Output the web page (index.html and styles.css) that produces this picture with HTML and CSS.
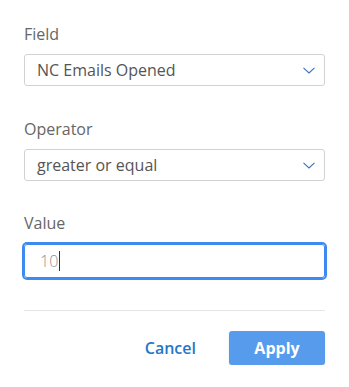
FILE: index.html
```html
<!DOCTYPE html>
<html>
<head>
<meta charset="utf-8">
<link rel="stylesheet" href="styles.css">
</head>
<body>
<div class="panel">
  <div class="group">
    <div class="label">Field</div>
    <div class="select">
      <span class="select-text">NC Emails Opened</span>
      <svg class="chev" width="12" height="7" viewBox="0 0 12 7"><path d="M0.5 0.8 L6 6 L11.5 0.8" fill="none" stroke="#3b72b6" stroke-width="1.1"/></svg>
    </div>
  </div>
  <div class="group">
    <div class="label">Operator</div>
    <div class="select">
      <span class="select-text">greater or equal</span>
      <svg class="chev" width="12" height="7" viewBox="0 0 12 7"><path d="M0.5 0.8 L6 6 L11.5 0.8" fill="none" stroke="#3b72b6" stroke-width="1.1"/></svg>
    </div>
  </div>
  <div class="group">
    <div class="label">Value</div>
    <div class="input"><span class="input-text">10</span><span class="caret"></span></div>
  </div>
  <div class="divider"></div>
  <div class="actions">
    <button class="btn-cancel">Cancel</button>
    <button class="btn-apply">Apply</button>
  </div>
</div>
</body>
</html>
```
FILE: styles.css
```css
html, body {
  margin: 0;
  padding: 0;
  background: #fff;
}
body {
  font-family: "Open Sans", "Liberation Sans", sans-serif;
}
.panel {
  padding: 24px 24px 0 24px;
  display: flex;
  flex-direction: column;
}
.group {
  display: flex;
  flex-direction: column;
  gap: 10px;
  margin-bottom: 33px;
}
.group:nth-child(2) {
  margin-bottom: 32px;
}
.group:nth-child(3) {
  margin-bottom: 32px;
}
.label {
  font-size: 16px;
  line-height: 20px;
  color: #666;
}
.select {
  box-sizing: border-box;
  height: 32px;
  border: 1px solid #d2d2d2;
  border-radius: 3px;
  display: flex;
  align-items: center;
  justify-content: space-between;
  padding: 0 9px 0 12px;
}
.select-text {
  font-size: 16px;
  color: #555;
  line-height: 20px;
}
.chev {
  display: block;
  margin-top: 1px;
}
.input {
  box-sizing: border-box;
  height: 34px;
  margin-top: 1px;
  border: 1px solid #3d8bf0;
  box-shadow: 0 0 0 2px #3d8bf0;
  border-radius: 3px;
  display: flex;
  align-items: center;
  padding-left: 15px;
}
.input-text {
  font-size: 16px;
  color: #8f8f8f;
  font-weight: 300;
  line-height: 20px;
}
.caret {
  display: inline-block;
  width: 1px;
  height: 20px;
  background: #333;
  margin-left: 1px;
}
.divider {
  height: 1px;
  background: #e4e4e4;
}
.actions {
  display: flex;
  justify-content: flex-end;
  align-items: center;
  margin-top: 20px;
  gap: 33px;
}
.btn-cancel {
  border: none;
  background: none;
  padding: 0;
  font-family: inherit;
  font-size: 16px;
  font-weight: 600;
  color: #1f77c9;
}
.btn-apply {
  border: none;
  width: 96px;
  height: 34px;
  border-radius: 3px;
  background: #579bec;
  color: #fff;
  font-family: inherit;
  font-size: 16px;
  font-weight: 700;
  box-shadow: 0 1px 2px rgba(0,0,0,0.12);
}
```
